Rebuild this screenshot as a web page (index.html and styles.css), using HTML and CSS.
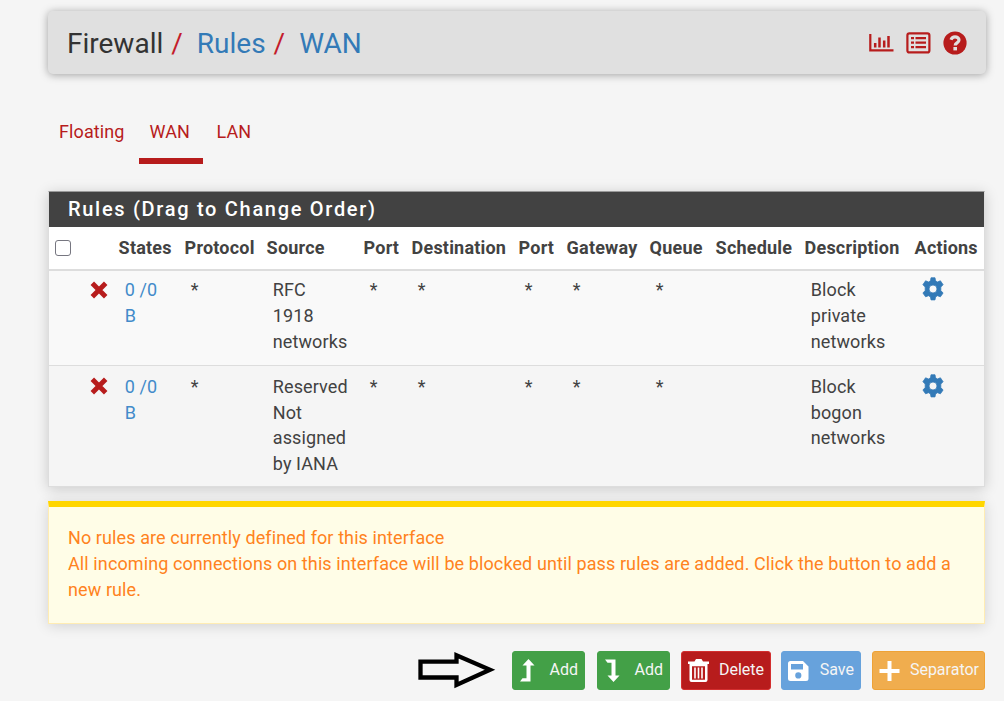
FILE: index.html
```html
<!DOCTYPE html>
<html lang="en">
<head>
<meta charset="utf-8">
<title>Firewall: Rules: WAN</title>
<link rel="stylesheet" href="styles.css">
</head>
<body>
<main class="page">
  <header class="header">
    <h1 class="crumbs"><span>Firewall</span><i class="sep1">/</i><a>Rules</a><i class="sep2">/</i><a>WAN</a></h1>
    <div class="tools">
      <svg width="25" height="20" viewBox="0 0 25 20" fill="none" stroke="#b71c1c"><path d="M1.300 1v16.300h23.200" stroke-width="2.200"/><path d="M6.200 10v4.500M10.500 4.500v10M15.200 7.500v7M19.500 3v11.500" stroke-width="2.500"/></svg>
      <svg width="25" height="22" viewBox="0 0 25 22" fill="none" stroke="#b71c1c"><rect x="1.400" y="1.400" width="22" height="19" rx="2" stroke-width="2.200"/><path d="M5 6.200h3M5 10.700h3M5 15.200h3M9.500 6.200h10.500M9.500 10.700h10.500M9.500 15.200h10.500" stroke-width="2.300"/></svg>
      <svg width="24" height="24" viewBox="0 0 24 24"><circle cx="12" cy="12" r="11.600" fill="#b71c1c"/><path d="M8 8.700C8.800 6.500 10.200 5.800 12 5.800c2.300 0 4 1.300 4 3.200 0 2.900-3.800 2.800-3.800 5.400" fill="none" stroke="#e0e0e0" stroke-width="3.200"/><rect x="10.400" y="16" width="3.600" height="3.400" fill="#e0e0e0"/></svg>
    </div>
  </header>

  <nav class="tabs"><a>Floating</a><a class="active">WAN</a><a>LAN</a></nav>

  <section class="panel">
    <h2 class="title">Rules (Drag to Change Order)</h2>
    <table class="rules">
      <colgroup><col class="w34"><col class="w29"><col class="w66"><col class="w82"><col class="w97"><col class="w48"><col class="w107"><col class="w48"><col class="w83"><col class="w66"><col class="w89"><col class="w110"><col></colgroup>
      <thead><tr><th><span class="check"></span></th><th></th><th>States</th><th>Protocol</th><th>Source</th><th>Port</th><th>Destination</th><th>Port</th><th>Gateway</th><th>Queue</th><th>Schedule</th><th>Description</th><th>Actions</th></tr></thead>
      <tbody>
        <tr><td></td><td class="mark"><svg width="18" height="18" viewBox="0 0 18 18"><path d="M2.300 2.300l13.400 13.400M15.700 2.300l-13.400 13.400" stroke="#b71c1c" stroke-width="4.900"/></svg></td><td><a>0 /0<br>B</a></td><td>*</td><td>RFC<br>1918<br>networks</td><td>*</td><td>*</td><td>*</td><td>*</td><td>*</td><td></td><td>Block<br>private<br>networks</td><td><svg width="24" height="24" viewBox="0 0 24 24"><path fill-rule="evenodd" fill="#337ab7" stroke="#337ab7" stroke-width=".8" stroke-linejoin="round" d="M9.500 3.800 10 .8h4l.5 3 2 1.200 2.900-1.200 2.700 3.900-2.300 2.300v3.600l2.300 2.400-2.700 3.800-2.900-1.100-2 1.200-.5 3h-4l-.5-3-2-1.200-2.900 1.100-2.700-3.800 2.300-2.400V10L1.900 7.700l2.700-3.900L7.500 5zM12 8a4 4 0 1 0 0 8 4 4 0 0 0 0-8z"/></svg></td></tr>
        <tr><td></td><td class="mark"><svg width="18" height="18" viewBox="0 0 18 18"><path d="M2.300 2.300l13.400 13.400M15.700 2.300l-13.400 13.400" stroke="#b71c1c" stroke-width="4.900"/></svg></td><td><a>0 /0<br>B</a></td><td>*</td><td>Reserved<br>Not<br>assigned<br>by IANA</td><td>*</td><td>*</td><td>*</td><td>*</td><td>*</td><td></td><td>Block<br>bogon<br>networks</td><td><svg width="24" height="24" viewBox="0 0 24 24"><path fill-rule="evenodd" fill="#337ab7" stroke="#337ab7" stroke-width=".8" stroke-linejoin="round" d="M9.500 3.800 10 .8h4l.5 3 2 1.200 2.900-1.200 2.700 3.900-2.300 2.300v3.600l2.300 2.400-2.700 3.800-2.900-1.100-2 1.200-.5 3h-4l-.5-3-2-1.200-2.900 1.100-2.700-3.800 2.300-2.400V10L1.900 7.700l2.700-3.900L7.500 5zM12 8a4 4 0 1 0 0 8 4 4 0 0 0 0-8z"/></svg></td></tr>
      </tbody>
    </table>
  </section>

  <div class="alert">No rules are currently defined for this interface<br>All incoming connections on this interface will be blocked until pass rules are added. Click the button to add a<br>new rule.</div>

  <div class="actions">
    <svg class="arrow" width="80" height="40" viewBox="0 0 80 40"><path d="M4.500 10.700h36V4.200L74 18.700 40.500 34V26.500h-36z" fill="none" stroke="#000" stroke-width="4.300"/></svg>
    <a class="btn add first"><svg width="16" height="25" viewBox="0 0 16 25" fill="#fff"><path d="M9.500 1 15.500 7.500h-4V23.500H1l2.500-3.200h4V7.500h-4z"/></svg><span>Add</span></a>
    <a class="btn add"><svg width="16" height="25" viewBox="0 0 16 25" fill="#fff"><path d="M9.500 24 15.500 17.500h-4V1.500H1l2.500 3.200h4v12.800h-4z"/></svg><span>Add</span></a>
    <a class="btn delete"><svg width="21" height="25" viewBox="0 0 21 25"><path d="M0 3.500h6.500L8 1h5.500L15 3.500h6V6H0z" fill="#fff"/><path fill-rule="evenodd" fill="#fff" d="M1.500 6h18v16q0 2-2 2h-14q-2 0-2-2zM4 8.300V21.700h13V8.300z"/><path d="M7 9.500v11M10.500 9.500v11M14 9.500v11" stroke="#fff" stroke-width="1.600"/></svg><span>Delete</span></a>
    <a class="btn save"><svg width="21" height="22" viewBox="0 0 21 22"><path fill-rule="evenodd" fill="#fff" d="M2.500 1H15l5.500 5.500v12q0 2.500-2.500 2.500H2.500Q0 21 0 18.500v-15Q0 1 2.500 1zM3 4v5.500h12V4zM10.300 12.300a3.100 3.100 0 1 0 0 6.200 3.100 3.100 0 0 0 0-6.200z"/></svg><span>Save</span></a>
    <a class="btn separator"><svg width="21" height="22" viewBox="0 0 21 22"><path d="M10.500 1v20M.5 11h20" stroke="#fff" stroke-width="4"/></svg><span>Separator</span></a>
  </div>
</main>
</body>
</html>
```
FILE: styles.css
```css
* { box-sizing: border-box; }
body { margin: 0; background: #f5f5f5; color: #424242; font: 18px/26px Roboto, sans-serif; letter-spacing: .1px; height: 701px; overflow: hidden; }
svg { display: block; flex: none; }
.page { padding: 11px 18px 0 48px; }
.header { height: 63px; width: 938px; background: #e0e0e0; border-radius: 5px; box-shadow: 0 1px 9px rgba(0,0,0,.35); display: flex; justify-content: space-between; align-items: center; padding: 1px 19px 0 19px; }
.crumbs { margin: 0; padding-top: 2px; font-size: 28px; line-height: 36px; font-weight: 400; letter-spacing: 0; color: #333; display: flex; }
.crumbs i { font-style: normal; color: #c41c2c; }
.crumbs a { color: #337ab7; }
.sep1 { margin: 0 14px 0 8px; }
.sep2 { margin: 0 14px 0 8px; }
.tools { display: flex; align-items: center; gap: 12px; }
.tabs { display: flex; margin-top: 27px; height: 63px; padding-top: 17px; color: #b71c1c; }
.tabs a { height: 46px; padding: 1px 11px 0; }
.tabs .active { border-bottom: 6px solid #b71c1c; margin: 0 3px 0 3px; width: 64px; }
.panel { margin-top: 27px; width: 937px; height: 296px; border: 1px solid #ddd; border-top-color: #999; box-shadow: 0 2px 13px rgba(0,0,0,.18); background: #f5f5f5; }
.title { margin: 0; height: 35px; background: #424242; color: #fff; font-size: 20px; line-height: 34px; font-weight: 500; letter-spacing: 1.7px; padding-left: 19px; }
.rules { width: 935px; table-layout: fixed; border-collapse: collapse; }
.rules th { height: 43px; padding: 0 0 0 6.600px; text-align: left; vertical-align: middle; font-weight: 700; letter-spacing: .2px; background: #fff; white-space: nowrap; border-bottom: 2px solid #ddd; }
.rules th:first-child { padding-left: 6px; }
.rules td { padding: 6px 0 10px 12.800px; vertical-align: top; border-top: 1px solid #ddd; white-space: nowrap; }
.rules tbody tr:first-child td { background: #f9f9f9; }
.rules tbody tr:last-child td { padding-top: 8px; line-height: 25.700px; }
.rules td a { color: #428bca; }
.rules td.mark, .rules tbody tr:last-child td.mark { padding: 10px 0 0 6.500px; }
.rules tbody tr:last-child td.mark { padding-top: 11px; }
.check { display: block; width: 16px; height: 16px; border: 1.300px solid #767680; border-radius: 3px; background: #fff; }
.w29 { width: 29px; } .w34 { width: 34px; } .w48 { width: 48px; }
.w66 { width: 66px; } .w82 { width: 82px; } .w83 { width: 83px; }
.w89 { width: 89px; } .w97 { width: 97px; } .w107 { width: 107px; } .w110 { width: 110px; }
.alert { margin-top: 14px; width: 937px; height: 123px; border: 1px solid #ffecb3; border-top: 6px solid #ffd600; background: #fffde7; color: #ff8220; padding: 18px 19px 0; box-shadow: 0 2px 13px rgba(0,0,0,.14); white-space: nowrap; }
.actions { display: flex; margin-top: 27px; padding-left: 368px; }
.arrow { margin-right: 16px; }
.btn { height: 39px; flex: none; display: flex; align-items: center; justify-content: space-between; color: #f5f5f5; font-size: 16px; letter-spacing: 0; padding: 0 6px; border: 1px solid; border-radius: 3px; margin-right: 11px; }
.btn span { padding-bottom: 1px; }
.add { width: 73px; background: #43a047; border-color: #43a047; }
.add.first { margin-right: 12px; }
.delete { width: 90px; background: #b71c1c; border-color: #d32f2f; margin-right: 10px; }
.save { width: 80px; background: #67a2dc; border-color: #67a2dc; }
.separator { width: 113px; background: #f0ad4e; border-color: #eea236; margin-right: 0; padding-right: 5px; }
```
